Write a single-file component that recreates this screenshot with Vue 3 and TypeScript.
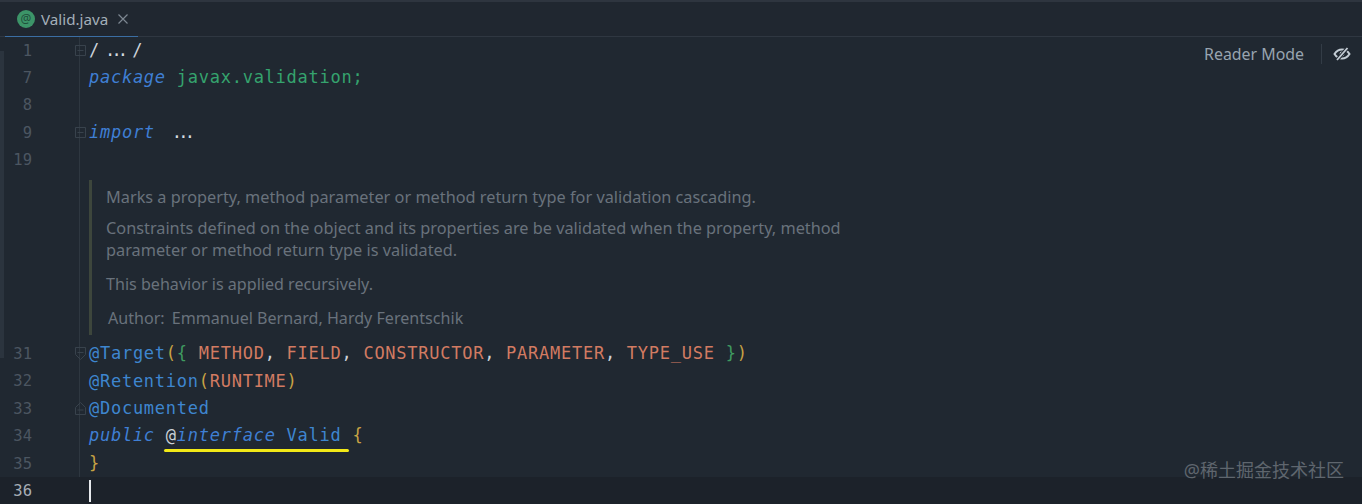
<script setup lang="ts">
type Seg = { t: string; c: string };
type Line = { n: number; fold?: string; segs: Seg[] };

const top: Line[] = [
  { n: 1, fold: 'box', segs: [{ t: '/', c: 'plain' }, { t: '...', c: 'dots d1' }, { t: '/', c: 'plain' }] },
  { n: 7, segs: [{ t: 'package', c: 'kw' }, { t: ' ', c: 'plain' }, { t: 'javax.validation;', c: 'pkg' }] },
  { n: 8, segs: [] },
  { n: 9, fold: 'box', segs: [{ t: 'import', c: 'kw' }, { t: '...', c: 'dots d2' }] },
  { n: 19, segs: [] },
];

const bottom: Line[] = [
  {
    n: 31,
    fold: 'down',
    segs: [
      { t: '@Target', c: 'ann' }, { t: '(', c: 'par' }, { t: '{', c: 'brace' }, { t: ' ', c: 'plain' },
      { t: 'METHOD', c: 'con' }, { t: ', ', c: 'plain' }, { t: 'FIELD', c: 'con' }, { t: ', ', c: 'plain' },
      { t: 'CONSTRUCTOR', c: 'con' }, { t: ', ', c: 'plain' }, { t: 'PARAMETER', c: 'con' }, { t: ', ', c: 'plain' },
      { t: 'TYPE_USE', c: 'con' }, { t: ' ', c: 'plain' }, { t: '}', c: 'brace' }, { t: ')', c: 'par' },
    ],
  },
  { n: 32, segs: [{ t: '@Retention', c: 'ann' }, { t: '(', c: 'par' }, { t: 'RUNTIME', c: 'con' }, { t: ')', c: 'par' }] },
  { n: 33, fold: 'up', segs: [{ t: '@Documented', c: 'ann' }] },
];

const sp = ' ';
</script>

<template>
  <div class="ide">
    <header class="tabbar">
      <div class="tab">
        <span class="file-icon">@</span>
        <span class="tab-name">Valid.java</span>
        <svg class="close" width="12" height="12" viewBox="0 0 12 12">
          <path d="M1.5 1.5l9 9M10.5 1.5l-9 9" stroke="#7d8791" stroke-width="1.2" fill="none" />
        </svg>
      </div>
    </header>

    <main class="editor">
      <div class="stripe"></div>

      <div class="reader">
        <span class="reader-label">Reader Mode</span>
        <span class="reader-sep"></span>
        <svg width="18" height="16" viewBox="0 0 18 16">
          <path d="M1.5 8C3.5 4.8 6 3.4 9 3.4S14.5 4.8 16.5 8C14.5 11.2 12 12.6 9 12.6S3.5 11.2 1.5 8Z" fill="none" stroke="#c3ccd4" stroke-width="2" />
          <circle cx="9" cy="8" r="2.4" fill="#c3ccd4" />
          <path d="M4 14L14.5 2" stroke="#202831" stroke-width="3.6" />
          <path d="M4 14L14.5 2" stroke="#c3ccd4" stroke-width="1.8" />
        </svg>
      </div>

      <div v-for="l in top" :key="l.n" class="row">
        <span class="num">{{ l.n }}</span>
        <span class="fold">
          <svg v-if="l.fold === 'box'" width="13" height="13" viewBox="0 0 13 13">
            <path d="M1.5 1.5h10v10h-10zM3.5 6.5h6" fill="none" stroke="#38424c" stroke-width="1" />
          </svg>
        </span>
        <code class="code"><span v-for="(s, i) in l.segs" :key="i" :class="s.c">{{ s.t }}</span></code>
      </div>

      <section class="doc-row">
        <span class="num"></span>
        <span class="fold"></span>
        <div class="doc">
          <p class="first">Marks a property, method parameter or method return type for validation cascading.</p>
          <p class="second">Constraints defined on the object and its properties are be validated when the property, method<br />parameter or method return type is validated.</p>
          <p class="third">This behavior is applied recursively.</p>
          <p class="author"><span class="author-key">Author:</span>Emmanuel Bernard, Hardy Ferentschik</p>
        </div>
      </section>

      <div v-for="l in bottom" :key="l.n" class="row">
        <span class="num">{{ l.n }}</span>
        <span class="fold">
          <svg v-if="l.fold === 'down'" width="13" height="15" viewBox="0 0 13 15">
            <path d="M1.5 1.5h10v7l-5 5-5-5z M3.5 6.5h6" fill="none" stroke="#38424c" stroke-width="1" />
          </svg>
          <svg v-else-if="l.fold === 'up'" width="13" height="15" viewBox="0 0 13 15">
            <path d="M1.5 13.5h10v-7l-5-5-5 5z M3.5 9h6" fill="none" stroke="#38424c" stroke-width="1" />
          </svg>
        </span>
        <code class="code"><span v-for="(s, i) in l.segs" :key="i" :class="s.c">{{ s.t }}</span></code>
      </div>

      <div class="row">
        <span class="num">34</span>
        <span class="fold"></span>
        <code class="code"><span class="kw">public</span>{{ sp }}<span class="marked"><span class="at">@</span><span class="kw">interface</span>{{ sp }}<span class="type">Valid</span></span>{{ sp }}<span class="par">{</span></code>
      </div>
      <div class="row">
        <span class="num">35</span>
        <span class="fold"></span>
        <code class="code"><span class="par">}</span></code>
      </div>
      <div class="row current">
        <span class="num">36</span>
        <span class="fold"></span>
        <code class="code"><span class="caret"></span></code>
      </div>

      <div class="watermark">@稀土掘金技术社区</div>
    </main>
  </div>
</template>

<style scoped>
.ide {
  width: 1362px;
  height: 504px;
  overflow: hidden;
  background: #202831;
  display: flex;
  flex-direction: column;
  font-family: "Noto Sans", sans-serif;
}

.tabbar {
  height: 37px;
  box-sizing: border-box;
  padding-left: 5px;
  background: #202730;
  border-top: 2px solid #2e353f;
  border-bottom: 1px solid #2f3741;
  flex: none;
}

.tab {
  width: 133px;
  height: 35px;
  box-sizing: border-box;
  border-bottom: 1px solid #3b6ea3;
  padding-left: 12px;
  display: flex;
  align-items: center;
}

.file-icon {
  width: 18px;
  height: 18px;
  border-radius: 50%;
  background: #3c9468;
  color: #1f4f3b;
  font-size: 12px;
  line-height: 17px;
  text-align: center;
  flex: none;
}

.tab-name {
  margin-left: 6px;
  font-size: 15.2px;
  color: #a4afb9;
}

.close {
  margin-left: 9px;
}

.editor {
  position: relative;
  flex: 1;
  background: #202831;
}

.stripe {
  position: absolute;
  left: 0;
  top: 14px;
  width: 4px;
  height: 307px;
  background: #2b343e;
}

.editor::before {
  content: "";
  position: absolute;
  left: 79px;
  top: 0;
  bottom: 0;
  width: 1px;
  background: #2e3740;
}

.row {
  position: relative;
  height: 27.4px;
  display: flex;
  align-items: center;
}

.row.current {
  background: #1c222a;
}

.num {
  width: 32px;
  flex: none;
  text-align: right;
  font-family: "DejaVu Sans Mono", monospace;
  font-size: 15.5px;
  color: #4c5661;
}

.current .num {
  color: #a6aeb6;
}

.fold {
  width: 57px;
  flex: none;
  display: flex;
  justify-content: flex-end;
  padding-right: 3px;
  box-sizing: border-box;
  position: relative;
}

.fold svg {
  position: relative;
  right: -1px;
}

.code {
  font-family: "DejaVu Sans Mono", monospace;
  font-size: 17px;
  letter-spacing: 0.74px;
  white-space: pre;
  line-height: 27.4px;
  color: #ccd3da;
}

.plain { color: #ccd3da; }
.kw { color: #3f7fd4; font-style: italic; }
.pkg { color: #35a36e; }
.ann { color: #3e86cf; }
.par { color: #c7a244; }
.brace { color: #3f9a60; }
.con { color: #d27b62; }
.at { color: #c9d0d6; }
.type { color: #3e86cf; }

.dots {
  color: #d5dbe0;
  letter-spacing: -3.8px;
}

.d1 {
  margin: 0 8px 0 5px;
}

.d2 {
  margin-left: 17px;
}

.marked {
  position: relative;
  display: inline-block;
}

.marked::after {
  content: "";
  position: absolute;
  left: -2px;
  right: -8px;
  top: 27px;
  height: 3px;
  border-radius: 2px;
  background: #f2e917;
}

.caret {
  display: inline-block;
  width: 2px;
  height: 22px;
  background: #e6e9ec;
  vertical-align: middle;
}

.doc-row {
  display: flex;
  height: 166.3px;
}

.doc {
  margin-top: 6px;
  height: 155px;
  box-sizing: border-box;
  border-left: 3px solid #3d463c;
  padding-left: 14px;
  font-size: 16.3px;
  line-height: 22px;
  color: #69727c;
  width: 780px;
}

.doc p {
  margin: 0;
  white-space: nowrap;
}

.doc .first { padding-top: 6px; }
.doc .second { margin-top: 9px; }
.doc .third { margin-top: 12px; font-size: 16.1px; }
.doc .author { margin-top: 12px; padding-left: 2px; font-size: 16.1px; }

.author-key {
  margin-right: 7px;
}

.reader {
  position: absolute;
  top: 7px;
  right: 11px;
  display: flex;
  align-items: center;
  height: 20px;
}

.reader-label {
  font-size: 15.9px;
  color: #98a4b0;
}

.reader-sep {
  width: 1px;
  height: 20px;
  margin: 0 11px 0 17px;
  background: #333c46;
}

.watermark {
  position: absolute;
  right: 18px;
  bottom: 23px;
  font-family: "Noto Sans", "Noto Sans CJK SC", sans-serif;
  font-size: 18px;
  color: #5f666e;
}
</style>
